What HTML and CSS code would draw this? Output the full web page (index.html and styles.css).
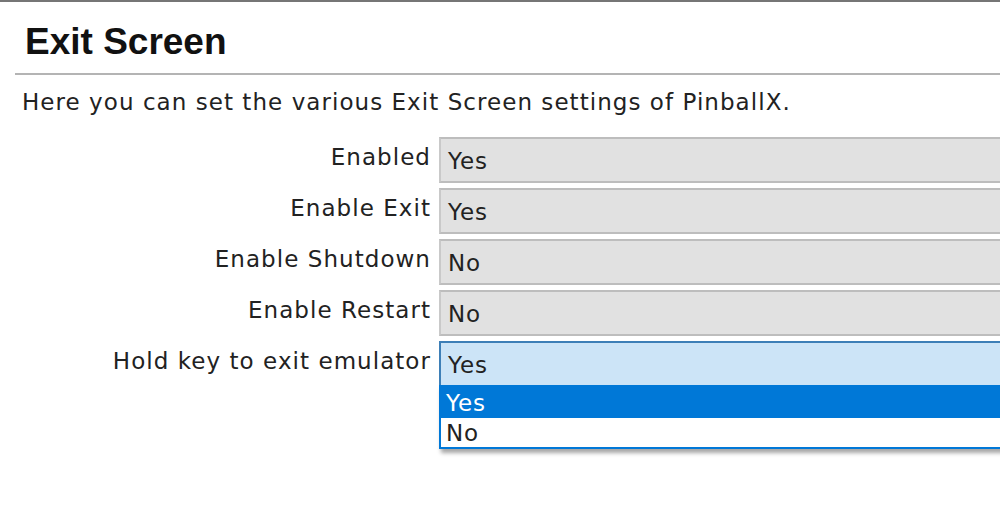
FILE: index.html
```html
<!DOCTYPE html>
<html>
<head>
<meta charset="utf-8">
<link rel="stylesheet" href="styles.css">
</head>
<body>
<div class="page">
  <h1 class="title">Exit Screen</h1>
  <hr class="rule">
  <p class="intro">Here you can set the various Exit Screen settings of PinballX.</p>
  <div class="form">
    <div class="row">
      <span class="label">Enabled</span>
      <div class="select">Yes</div>
    </div>
    <div class="row">
      <span class="label">Enable Exit</span>
      <div class="select">Yes</div>
    </div>
    <div class="row">
      <span class="label">Enable Shutdown</span>
      <div class="select">No</div>
    </div>
    <div class="row">
      <span class="label">Enable Restart</span>
      <div class="select">No</div>
    </div>
    <div class="row">
      <span class="label">Hold key to exit emulator</span>
      <div class="select-wrap">
        <div class="select focused">Yes</div>
        <ul class="listbox">
          <li class="option selected">Yes</li>
          <li class="option">No</li>
        </ul>
      </div>
    </div>
  </div>
</div>
</body>
</html>
```

FILE: styles.css
```css
html, body {
  margin: 0;
  padding: 0;
  background: #ffffff;
  overflow: hidden;
}

.page {
  width: 1100px;
  height: 526px;
  border-top: 2px solid #767676;
  box-sizing: border-box;
  font-family: "DejaVu Sans", Verdana, sans-serif;
  color: #222222;
}

.title {
  margin: 0;
  padding: 19px 0 0 25px;
  font-family: "Liberation Sans", Arial, sans-serif;
  font-weight: bold;
  font-size: 37px;
  line-height: 42px;
  color: #111111;
}

.rule {
  margin: 10px 0 0 15px;
  border: 0;
  height: 2px;
  background: #b4b4b4;
}

.intro {
  margin: 0;
  padding: 13px 0 0 22px;
  font-size: 23px;
  letter-spacing: 1.05px;
  line-height: 28px;
  color: #222222;
}

.form {
  margin-top: 21px;
  display: grid;
  grid-template-columns: 430px 1fr;
  column-gap: 9px;
  row-gap: 5px;
}

.row {
  display: contents;
}

.label {
  text-align: right;
  font-size: 23px;
  letter-spacing: 1.05px;
  line-height: 40px;
  margin-right: -1px;
  color: #222222;
}

.select {
  height: 46px;
  box-sizing: border-box;
  background: #e1e1e1;
  border: 2px solid #c9c9c9;
  border-top-color: #bdbdbd;
  border-bottom-color: #bdbdbd;
  padding: 0 0 0 7px;
  font-size: 23px;
  letter-spacing: 0.9px;
  line-height: 44px;
  color: #222222;
}

.select-wrap {
  position: relative;
}

.select.focused {
  background: #cce4f7;
  border: 2px solid #3d7fb7;
}

.listbox {
  position: absolute;
  left: 0;
  right: 0;
  top: 44px;
  margin: 0;
  padding: 0;
  list-style: none;
  background: #ffffff;
  border: 2px solid #0078d7;
  border-top: 0;
  box-shadow: 2px 4px 4px rgba(0, 0, 0, 0.35);
}

.option {
  padding-left: 5px;
  font-size: 23px;
  letter-spacing: 0.9px;
  height: 29px;
  line-height: 31px;
  color: #222222;
}

.option.selected {
  background: #0078d7;
  color: #ffffff;
  height: 33px;
  line-height: 36px;
}
```
